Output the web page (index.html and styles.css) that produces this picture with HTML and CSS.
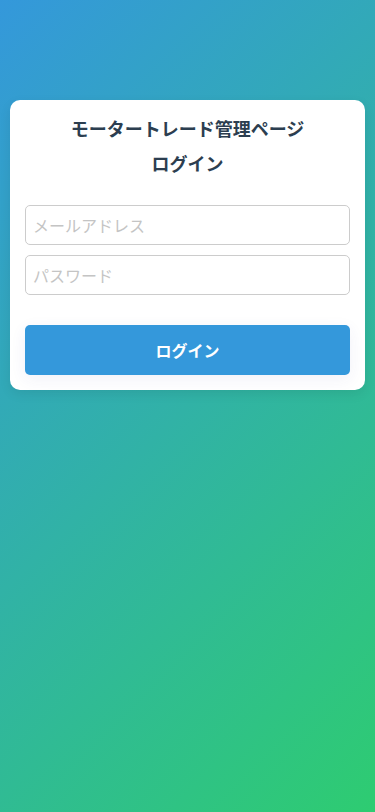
FILE: index.html
```html
<!DOCTYPE html>
<html lang="ja">
<head>
<meta charset="utf-8">
<meta name="viewport" content="width=device-width, initial-scale=1">
<title>ログイン</title>
<link rel="stylesheet" href="styles.css">
</head>
<body>
<main class="page">
  <section class="card">
    <h1 class="title">モータートレード管理ページ</h1>
    <h2 class="subtitle">ログイン</h2>
    <form class="form">
      <input class="field" type="email" placeholder="メールアドレス">
      <input class="field" type="password" placeholder="パスワード">
      <button class="submit" type="button">ログイン</button>
    </form>
  </section>
</main>
</body>
</html>
```

FILE: styles.css
```css
* { box-sizing: border-box; }
html, body { margin: 0; padding: 0; }
body {
  font-family: "Noto Sans CJK JP", "Noto Sans", sans-serif;
  min-height: 812px;
  background: linear-gradient(135deg, #3498db 0%, #2ecc71 100%);
}
.page {
  padding: 100px 10px 0;
}
.card {
  background: #fff;
  border-radius: 10px;
  padding: 15px 15px 15px;
  box-shadow: 0 4px 12px rgba(0, 0, 0, 0.08);
}
.title, .subtitle {
  margin: 0;
  text-align: center;
  font-size: 18px;
  line-height: 26px;
  font-weight: 700;
  color: #2c3e50;
}
.subtitle { margin-top: 9px; }
.form {
  display: flex;
  flex-direction: column;
  margin-top: 29px;
}
.field {
  height: 40px;
  border: 1px solid #cccccc;
  border-radius: 5px;
  padding: 0 7px;
  font-family: inherit;
  font-size: 16px;
  color: #333;
  background: #fff;
  outline: none;
}
.field + .field { margin-top: 10px; }
.field::placeholder { color: #c4c4c4; }
.submit {
  margin-top: 30px;
  height: 50px;
  border: none;
  border-radius: 5px;
  background: #3498db;
  color: #fff;
  font-family: inherit;
  font-size: 16px;
  font-weight: 700;
  box-shadow: 0 4px 16px rgba(60, 60, 160, 0.07);
  cursor: pointer;
}
```
